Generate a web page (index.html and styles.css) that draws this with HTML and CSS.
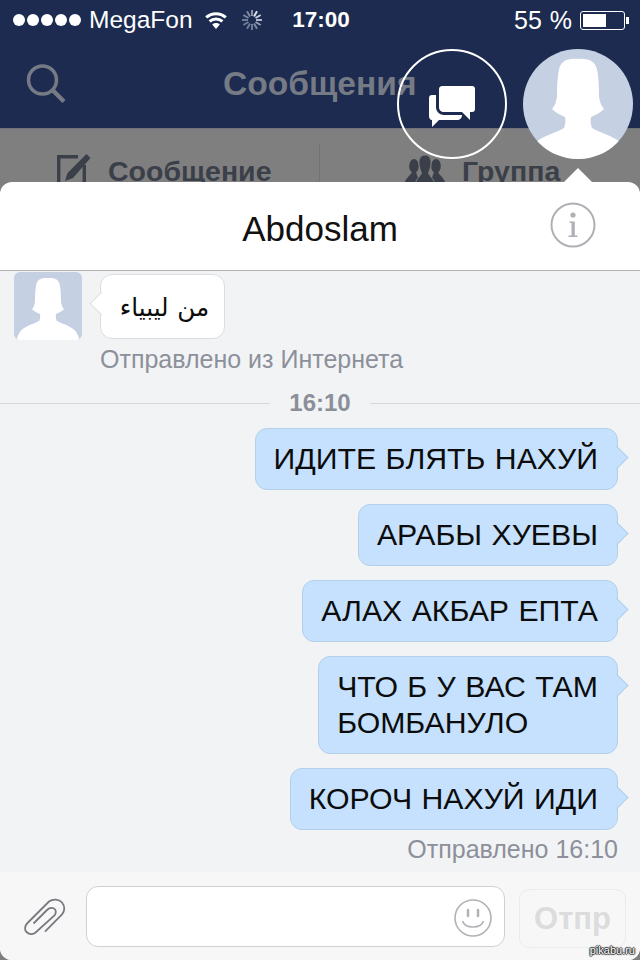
FILE: index.html
```html
<!DOCTYPE html>
<html lang="en">
<head>
    <meta charset="UTF-8">
    <meta name="viewport" content="width=device-width, initial-scale=1.0">
    <title>Сообщения</title>
    <link rel="stylesheet" href="styles.css">
</head>
<body>
    <svg class="defs" width="0" height="0">
        <symbol id="person" viewBox="0 0 110 110">
            <path d="M55 10C44 9 37 12 35.500 23C34 33 34 40 34 48C33 53 32 57 29 60C32 63 37 66 42 68C43 72 42 76 41 79C33 84 22 86 13 93C9 97 6 102 4 110H106C104 102 101 97 97 93C88 86 77 84 69 79C68 76 67 72 68 68C73 66 78 63 81 60C78 57 77 53 76 48C76 40 76 33 74.500 23C73 12 66 9 55 10Z" fill="#fff"/>
        </symbol>
    </svg>

    <div class="phone">
        <header class="top">
            <div class="status">
                <div class="status-left">
                    <span class="dots"><i></i><i></i><i></i><i></i><i></i></span>
                    <span class="carrier">MegaFon</span>
                    <svg class="wifi" width="24" height="18" viewBox="0 0 24 18">
                        <path d="M12 18L8.200 13.400C10.400 11.600 13.600 11.600 15.800 13.400Z" fill="#fff"/>
                        <path d="M5.600 10.400C9.300 7.200 14.700 7.200 18.400 10.400M2.200 6.400C8 1.400 16 1.400 21.800 6.400" fill="none" stroke="#fff" stroke-width="3"/>
                    </svg>
                    <svg class="spinner" width="20" height="20" viewBox="0 0 20 20" stroke-width="2" fill="none">
                        <path d="M10 0V6" stroke="#8b95ab"/>
                        <path d="M15 1.300L12 6.500" stroke="#dfe3ec"/>
                        <path d="M18.700 5L13.500 8" stroke="#c8cfdc"/>
                        <path d="M20 10H14" stroke="#aeb6c7"/>
                        <path d="M18.700 15L13.500 12" stroke="#959fb4"/>
                        <path d="M15 18.700L12 13.500" stroke="#7e8aa3"/>
                        <path d="M10 20V14" stroke="#6f7b97"/>
                        <path d="M5 18.700L8 13.500" stroke="#6f7b97"/>
                        <path d="M1.300 15L6.500 12" stroke="#6f7b97"/>
                        <path d="M0 10H6" stroke="#6f7b97"/>
                        <path d="M1.300 5L6.500 8" stroke="#7e8aa3"/>
                        <path d="M5 1.300L8 6.500" stroke="#7e8aa3"/>
                    </svg>
                </div>
                <div class="clock">17:00</div>
                <div class="status-right">
                    <span class="percent">55 %</span>
                    <span class="battery"><span class="battery-fill"></span></span>
                    <span class="battery-tip"></span>
                </div>
            </div>
            <div class="nav">
                <svg class="search" width="40" height="40" viewBox="0 0 40 40" fill="none" stroke="#757a85">
                    <circle cx="16.500" cy="16" r="14" stroke-width="3.500"/>
                    <path d="M26.500 26L38 37.500" stroke-width="4.500"/>
                </svg>
                <h1 class="nav-title">Сообщения</h1>
            </div>
        </header>

        <div class="tabs">
            <div class="tab tab-left">
                <svg class="tab-icon" width="34" height="36" viewBox="0 0 34 36" fill="none" stroke="#3b3f49">
                    <path d="M21 2.700H1.700V36H27.300V11" stroke-width="3.400"/>
                    <path d="M29.500 0L10.500 19L8 27L16 24L33.500 4Z" fill="#3b3f49" stroke="none"/>
                </svg>
                <span>Сообщение</span>
            </div>
            <div class="tab tab-right">
                <svg class="tab-icon" width="41" height="36" viewBox="0 0 41 36" fill="#3b3f49">
                    <ellipse cx="9" cy="12" rx="4.800" ry="7"/>
                    <ellipse cx="31" cy="12" rx="4.800" ry="7"/>
                    <path d="M0 36V28C1 24 5 22 7 18H11L17 36ZM40 36V28C39 24 35 22 33 18H29L23 36Z"/>
                    <path d="M20 1C15.500 1 13.500 5 14 10C14.500 14 15.500 17 16.500 19C15 23 9 26 9 36H31C31 26 25 23 23.500 19C24.500 17 25.500 14 26 10C26.500 5 24.500 1 20 1Z" stroke="#7f7f7f"/>
                </svg>
                <span>Группа</span>
            </div>
        </div>

        <main class="card">
            <div class="card-head">
                <h2 class="card-title">Abdoslam</h2>
                <svg class="info" width="46" height="46" viewBox="0 0 46 46">
                    <circle cx="23" cy="23" r="21.500" fill="none" stroke="#aeb0b6" stroke-width="2"/>
                    <circle cx="23" cy="13" r="2.600" fill="#aeb0b6"/>
                    <path d="M19.500 19.500H24.800V33.500H27.500V35H18.500V33.500H21.500V21H19.500Z" fill="#aeb0b6"/>
                </svg>
            </div>

            <section class="chat">
                <div class="incoming">
                    <div class="avatar">
                        <svg width="68" height="68"><use href="#person"/></svg>
                    </div>
                    <div class="incoming-body">
                        <div class="bubble bubble-in"><span class="arabic" dir="rtl">من ليبياء</span></div>
                    </div>
                </div>
                <div class="note note-in">Отправлено из Интернета</div>

                <div class="divider"><span>16:10</span></div>

                <div class="bubble bubble-out">ИДИТЕ БЛЯТЬ НАХУЙ</div>
                <div class="bubble bubble-out">АРАБЫ ХУЕВЫ</div>
                <div class="bubble bubble-out">АЛАХ АКБАР ЕПТА</div>
                <div class="bubble bubble-out">ЧТО Б У ВАС ТАМ<br>БОМБАНУЛО</div>
                <div class="bubble bubble-out">КОРОЧ НАХУЙ ИДИ</div>
                <div class="note note-out">Отправлено 16:10</div>
            </section>

            <footer class="composer">
                <svg class="clip" width="44" height="38" viewBox="0 0 44 38" fill="none" stroke="#77797e" stroke-width="1.800">
                    <path d="M22 33.700L39 16.500C42 13 42 8 39 4.500C36 1 30 0.500 26 3.500L4.500 25C1.500 28 1.500 32 3.500 34C6 36.500 9.500 36.500 12 35L31.500 17.500C33.500 15 33 11.500 31 10.500C29 9.500 26 10 24 12L10.500 25.500"/>
                </svg>
                <div class="field">
                    <svg class="smile" width="38" height="38" viewBox="0 0 38 38" fill="none" stroke="#b0b2b6" stroke-width="1.600">
                        <circle cx="19" cy="19" r="18"/>
                        <path d="M8.500 22C11 30 27 30 29.500 22"/>
                        <path d="M14 11V17M24 11V17" stroke-width="2.500" stroke-linecap="round"/>
                    </svg>
                </div>
                <div class="send">Отпр</div>
            </footer>
        </main>

        <div class="head head-chat">
            <svg width="106" height="106" viewBox="0 0 106 106">
                <path d="M33 44H37V56C37 60 40 64 45 64H63C63 67 61 69 58 69H40L33 76V69C31 69 30 67 30 65V47C30 45 31 44 33 44Z" fill="#fff"/>
                <path d="M44 35H73C75 35 76 36 76 38V58C76 60 75 61 73 61H71V69L63 61H45C42 61 40 59 40 56V39C40 36 41 35 44 35Z" fill="#fff"/>
            </svg>
        </div>
        <div class="head head-user">
            <svg width="110" height="110"><use href="#person"/></svg>
        </div>
        <div class="caret"></div>
        <div class="watermark">pikabu.ru</div>
    </div>
</body>
</html>
```
FILE: styles.css
```css
* {
    box-sizing: border-box;
}

body {
    margin: 0;
    font-family: "Liberation Sans", Arial, sans-serif;
}

.defs {
    display: block;
    position: absolute;
}

.phone {
    position: relative;
    display: flex;
    flex-direction: column;
    width: 640px;
    height: 960px;
    overflow: hidden;
    background: #7f7f7f;
}

.top {
    height: 128px;
    background: #1c2b4f;
    color: #fff;
}

.status {
    display: grid;
    grid-template-columns: 1fr auto 1fr;
    align-items: center;
    height: 40px;
    padding: 0 11px 0 13px;
}

.status-left,
.status-right {
    display: flex;
    align-items: center;
}

.status-right {
    justify-content: flex-end;
}

.dots {
    display: flex;
    gap: 2px;
}

.dots i {
    width: 12px;
    height: 12px;
    border-radius: 50%;
    background: #fff;
}

.carrier {
    margin-left: 8px;
    font-size: 24.500px;
}

.wifi {
    margin-left: 11px;
}

.spinner {
    margin-left: 14px;
}

.clock {
    font-size: 22.500px;
    font-weight: bold;
}

.percent {
    font-size: 25px;
    margin-right: 8px;
    word-spacing: 1px;
}

.battery {
    display: block;
    width: 45px;
    height: 19px;
    padding: 2px;
    border: 1px solid #fff;
    border-radius: 3px;
}

.battery-fill {
    display: block;
    width: 23px;
    height: 13px;
    background: #fff;
}

.battery-tip {
    width: 3px;
    height: 7px;
    margin-left: 1px;
    background: #fff;
}

.nav {
    display: flex;
    align-items: center;
    height: 88px;
    padding-left: 26px;
}

.nav-title {
    margin: 0 0 0 157px;
    font-size: 33.600px;
    font-weight: bold;
    color: #757a85;
}

.tabs {
    display: flex;
    height: 54px;
    padding-top: 15px;
    overflow: hidden;
    color: #3b3f49;
    font-size: 28.500px;
    font-weight: bold;
    border-top: 1px solid #6f7278;
}

.tab {
    display: flex;
    align-items: flex-start;
    width: 320px;
    padding-top: 10px;
}

.tab span {
    line-height: 34px;
}

.tab-left {
    gap: 17px;
    padding-left: 57px;
    border-right: 1px solid #737373;
}

.tab-right {
    gap: 16px;
    padding-left: 85px;
}

.tab-icon {
    flex: none;
}

.card {
    display: flex;
    flex-direction: column;
    flex: 1;
    min-height: 0;
    overflow: hidden;
    border-radius: 12px;
    background: #fff;
}

.card-head {
    display: flex;
    align-items: center;
    justify-content: center;
    position: relative;
    height: 89px;
    border-bottom: 1px solid #b2b2b4;
}

.card-title {
    margin: 0;
    padding-top: 6px;
    font-size: 35px;
    font-weight: normal;
    color: #111;
}

.info {
    position: absolute;
    right: 44px;
    top: 20px;
}

.chat {
    display: flex;
    flex-direction: column;
    flex: 1;
    padding: 1px 22px 0 14px;
    background: #f2f3f5;
}

.incoming {
    display: flex;
    gap: 18px;
}

.avatar {
    width: 68px;
    height: 68px;
    overflow: hidden;
    border-radius: 6px;
    background: #c5d0e3;
}

.avatar svg {
    display: block;
}

.incoming-body {
    padding-top: 2px;
}

.bubble {
    position: relative;
    padding: 12px 19px 12px 18px;
    border-radius: 12px;
    font-size: 30.250px;
    line-height: 36px;
    word-spacing: 1px;
    color: #0c0c0c;
}

.bubble::after {
    content: "";
    position: absolute;
    top: 20px;
    width: 16px;
    height: 16px;
    transform: rotate(45deg);
}

.bubble-in {
    width: 125px;
    height: 65px;
    padding: 13px 0 0 4px;
    text-align: center;
    background: #fff;
    border: 1px solid #dcdde0;
}

.bubble-in::after {
    left: -8px;
    background: #fff;
    border-left: 1px solid #dcdde0;
    border-bottom: 1px solid #dcdde0;
}

.arabic {
    font-family: "DejaVu Sans", sans-serif;
    font-size: 24.600px;
}

.bubble-out {
    align-self: flex-end;
    margin-bottom: 14px;
    background: #c5e1fd;
    border: 1px solid #b3d0ea;
}

.bubble-out::after {
    right: -8px;
    background: #c5e1fd;
    border-right: 1px solid #b3d0ea;
    border-top: 1px solid #b3d0ea;
}

.note {
    font-size: 25px;
    line-height: 26px;
    color: #8c909a;
}

.note-in {
    margin: 6px 0 0 86px;
}

.note-out {
    align-self: flex-end;
    margin-top: -8px;
}

.divider {
    display: flex;
    align-items: center;
    justify-content: center;
    margin: 18px -22px 12px -14px;
    font-size: 24px;
    line-height: 26px;
    font-weight: bold;
    color: #8b8f99;
}

.divider span {
    padding: 0 19px;
}

.divider::before,
.divider::after {
    content: "";
    flex: 1;
    height: 1px;
    background: #d5d6d9;
}

.composer {
    display: flex;
    align-items: flex-start;
    height: 88px;
    padding: 14px 14px 0 23px;
    background: #f7f7f8;
}

.clip {
    margin-top: 12px;
    flex: none;
}

.field {
    display: flex;
    align-items: center;
    justify-content: flex-end;
    width: 419px;
    height: 61px;
    margin-left: 19px;
    padding: 2px 12px 0 0;
    background: #fff;
    border: 1px solid #d0d0d2;
    border-radius: 12px;
}

.send {
    width: 107px;
    height: 59px;
    margin: 3px 0 0 14px;
    border: 1px solid #ebebec;
    border-radius: 10px;
    font-size: 31px;
    line-height: 57px;
    font-weight: bold;
    text-align: center;
    color: #dcdcdc;
}

.head {
    position: absolute;
    top: 49px;
    border-radius: 50%;
}

.head-chat {
    left: 397px;
    width: 110px;
    height: 110px;
    border: 2px solid #fff;
}

.head-chat svg {
    display: block;
}

.head-user {
    left: 523px;
    width: 110px;
    height: 110px;
    overflow: hidden;
    background: #c5d0e3;
}

.head-user svg {
    display: block;
}

.caret {
    position: absolute;
    left: 564px;
    top: 168px;
    width: 0;
    height: 0;
    border-left: 14px solid transparent;
    border-right: 14px solid transparent;
    border-bottom: 14px solid #fff;
}

.watermark {
    position: absolute;
    right: 5px;
    bottom: 4px;
    font-size: 11px;
    color: #fff;
    text-shadow: 1px 0 1px #222, -1px 0 1px #222, 0 1px 1px #222, 0 -1px 1px #222;
}
```
